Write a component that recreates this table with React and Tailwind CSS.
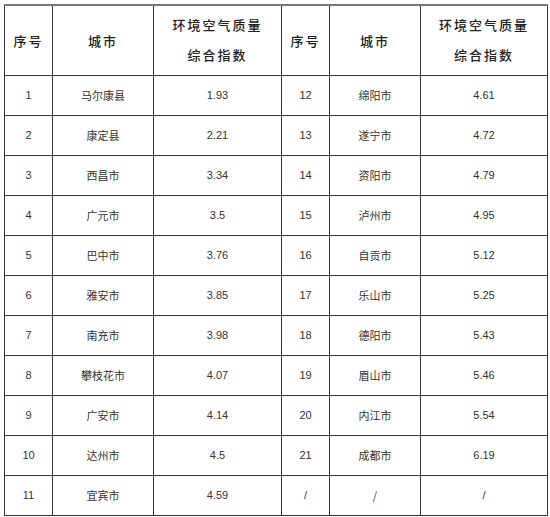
const rows = [
  ['1', '马尔康县', '1.93', '12', '绵阳市', '4.61'],
  ['2', '康定县', '2.21', '13', '遂宁市', '4.72'],
  ['3', '西昌市', '3.34', '14', '资阳市', '4.79'],
  ['4', '广元市', '3.5', '15', '泸州市', '4.95'],
  ['5', '巴中市', '3.76', '16', '自贡市', '5.12'],
  ['6', '雅安市', '3.85', '17', '乐山市', '5.25'],
  ['7', '南充市', '3.98', '18', '德阳市', '5.43'],
  ['8', '攀枝花市', '4.07', '19', '眉山市', '5.46'],
  ['9', '广安市', '4.14', '20', '内江市', '5.54'],
  ['10', '达州市', '4.5', '21', '成都市', '6.19'],
  ['11', '宜宾市', '4.59', '/', '/', '/'],
];

const widths = ['w-[48px]', 'w-[101px]', 'w-[128px]', 'w-[48px]', 'w-[91px]', 'w-[127px]'];

export default function App() {
  return (
    <div className="w-[550px] h-[517px] bg-white pt-[4px] pl-[4px] text-[#333]">
      <table className="table-fixed border-collapse w-[544px] font-['Liberation_Sans','Noto_Sans_CJK_SC',sans-serif]">
        <colgroup>
          {widths.map((w, i) => (
            <col key={i} className={w} />
          ))}
        </colgroup>
        <thead>
          <tr className="h-[70px]">
            {['序号', '城市', null, '序号', '城市', null].map((t, i) => (
              <th
                key={i}
                className="border border-[#333] border-t-2 border-t-[#777] p-0 text-center align-middle text-[13px] font-medium tracking-[2px] text-[#222] font-['Noto_Sans_CJK_SC',sans-serif]"
              >
                {t ?? (
                  <div className="leading-[30px]">
                    <div>环境空气质量</div>
                    <div>综合指数</div>
                  </div>
                )}
              </th>
            ))}
          </tr>
        </thead>
        <tbody>
          {rows.map((r, ri) => (
            <tr key={ri} className="h-[40px]">
              {r.map((c, ci) => (
                <td
                  key={ci}
                  className={
                    'border border-[#333] p-0 text-center align-middle ' +
                    (ci === 1 || ci === 4
                      ? "text-[11px] font-['Noto_Sans_CJK_SC',sans-serif]"
                      : 'text-[11px]')
                  }
                >
                  {c}
                </td>
              ))}
            </tr>
          ))}
        </tbody>
      </table>
    </div>
  );
}
